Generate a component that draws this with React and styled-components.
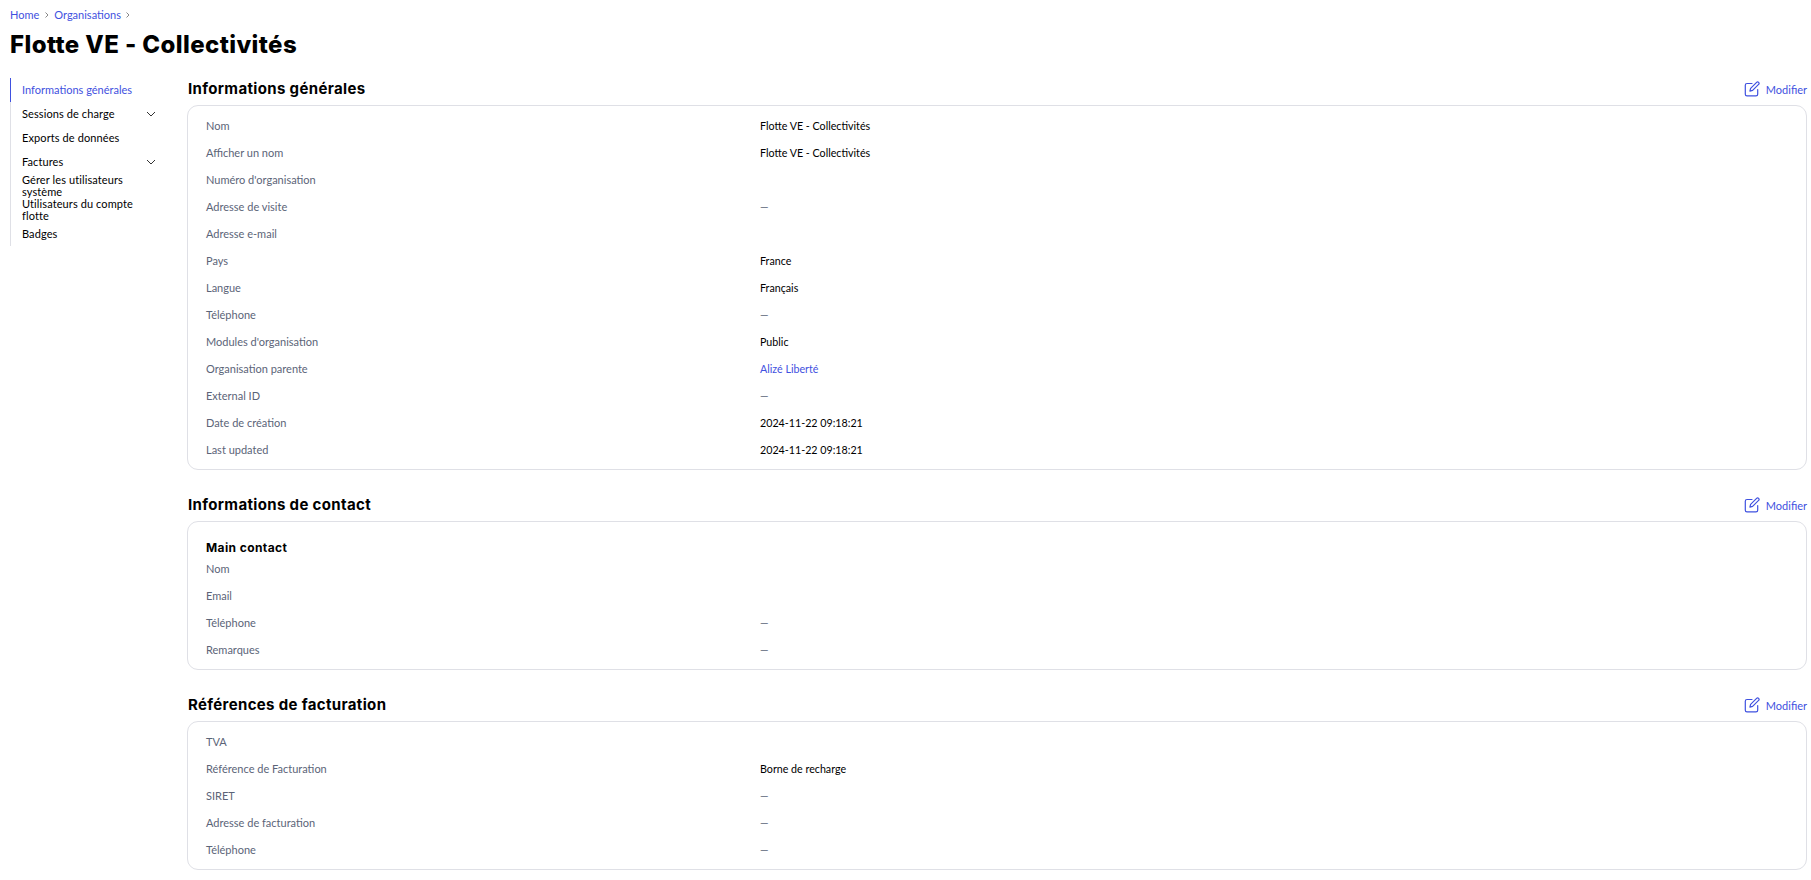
import React from "react";
import styled, { createGlobalStyle } from "styled-components";

const Global = createGlobalStyle`
  html, body { margin: 0; padding: 0; background: #fff; }
  body { font-family: "Lato", "Liberation Sans", sans-serif; color: #000; }
`;
const Page = styled.div`
  padding: 7px 4px 0 10px;
  height: 873px;
  overflow: hidden;
`;
const Crumbs = styled.nav`
  display: flex;
  align-items: center;
  height: 15px;
  font-size: 11px;
  color: #3f51e0;
`;
const Crumb = styled.a`
  color: #3f51e0;
`;
const Sep = styled.svg`
  width: 12px;
  height: 12px;
  margin: 0 1.5px;
  flex: none;
`;
const Title = styled.h1`
  margin: 8px 0 0;
  font-family: "Inter", sans-serif;
  font-size: 24px;
  line-height: 30px;
  font-weight: 800;
  letter-spacing: 0.4px;
`;
const Body = styled.div`
  display: flex;
  margin-top: 18px;
`;
const Side = styled.aside`
  width: 168px;
  flex: none;
  margin-right: 8px;
  align-self: flex-start;
  border-left: 1px solid #dfe0e6;
  display: flex;
  flex-direction: column;
`;
const NavItem = styled.div`
  display: flex;
  align-items: ${(p) => (p.$wrap ? "flex-start" : "center")};
  justify-content: space-between;
  min-height: 24px;
  padding: 0 22px 0 11px;
  font-size: 11px;
  letter-spacing: ${(p) => (p.$active ? "0" : "0.1px")};
  line-height: 12px;
  color: ${(p) => (p.$active ? "#3f51e0" : "#000")};
  ${(p) => p.$active && `border-left: 1px solid #3f51e0; margin-left: -1px;`}
`;
const Main = styled.main`
  flex: 1;
  min-width: 0;
  display: flex;
  flex-direction: column;
  gap: 24px;
`;
const Head = styled.div`
  display: flex;
  align-items: center;
  justify-content: space-between;
  height: 20px;
  padding-top: 1px;
  margin-bottom: 6px;
`;
const H2 = styled.h2`
  margin: 0 0 0 1px;
  font-family: "Inter", sans-serif;
  font-size: 15px;
  font-weight: 700;
  line-height: 20px;
  letter-spacing: 0.35px;
`;
const Edit = styled.a`
  display: flex;
  align-items: center;
  gap: 6px;
  font-size: 11px;
  color: #3f51e0;
`;
const Card = styled.section`
  border: 1px solid #dfe0e6;
  border-radius: 11px;
  padding: ${(p) => (p.$contact ? "18px 18px 6px" : "6px 18px")};
`;
const H3 = styled.h3`
  margin: 0;
  font-family: "Inter", sans-serif;
  font-size: 12px;
  font-weight: 700;
  line-height: 15px;
  letter-spacing: 0.4px;
`;
const Row = styled.div`
  display: grid;
  grid-template-columns: 554px 1fr;
  height: 27px;
  align-items: center;
  font-size: 11px;
`;
const Label = styled.span`
  color: #5b6478;
`;
const Value = styled.span`
  font-size: 10.7px;
  color: ${(p) => (p.$link ? "#3f51e0" : p.$empty ? "#5b6478" : "#000")};
`;

const Chevron = () => (
  <svg width="12" height="12" viewBox="0 0 12 12" fill="none" stroke="#333" strokeWidth="1">
    <path d="M2 4l4 4 4-4" />
  </svg>
);
const CrumbSep = () => (
  <Sep viewBox="0 0 12 12" fill="none" stroke="#888" strokeWidth="1">
    <path d="M4.5 3.5L7 6l-2.5 2.5" />
  </Sep>
);
const EditIcon = () => (
  <svg width="16" height="16" viewBox="0 0 16 16" fill="none" stroke="#3f51e0" strokeWidth="1.2" strokeLinecap="round" strokeLinejoin="round">
    <path d="M8 2.5H3A1.7 1.7 0 0 0 1.3 4.2v9A1.7 1.7 0 0 0 3 14.9h9a1.7 1.7 0 0 0 1.7-1.7V8.5" />
    <path d="M12.6 1.4a1.4 1.4 0 0 1 2 2L8.6 9.4l-2.7.7.7-2.7z" />
  </svg>
);

const Section = ({ title, contact, rows }) => (
  <div>
    <Head>
      <H2>{title}</H2>
      <Edit><EditIcon />Modifier</Edit>
    </Head>
    <Card $contact={contact}>
      {contact && <H3>Main contact</H3>}
      {rows.map(([l, v, link]) => (
        <Row key={l}>
          <Label>{l}</Label>
          <Value $link={link} $empty={v === "—"}>{v}</Value>
        </Row>
      ))}
    </Card>
  </div>
);

const general = [
  ["Nom", "Flotte VE - Collectivités"],
  ["Afficher un nom", "Flotte VE - Collectivités"],
  ["Numéro d'organisation", ""],
  ["Adresse de visite", "—"],
  ["Adresse e-mail", ""],
  ["Pays", "France"],
  ["Langue", "Français"],
  ["Téléphone", "—"],
  ["Modules d'organisation", "Public"],
  ["Organisation parente", "Alizé Liberté", true],
  ["External ID", "—"],
  ["Date de création", "2024-11-22 09:18:21"],
  ["Last updated", "2024-11-22 09:18:21"],
];
const contact = [
  ["Nom", ""],
  ["Email", ""],
  ["Téléphone", "—"],
  ["Remarques", "—"],
];
const billing = [
  ["TVA", ""],
  ["Référence de Facturation", "Borne de recharge"],
  ["SIRET", "—"],
  ["Adresse de facturation", "—"],
  ["Téléphone", "—"],
];

export default function App() {
  return (
    <Page>
      <Global />
      <Crumbs>
        <Crumb>Home</Crumb><CrumbSep /><Crumb>Organisations</Crumb><CrumbSep />
      </Crumbs>
      <Title>Flotte VE - Collectivités</Title>
      <Body>
        <Side>
          <NavItem $active>Informations générales</NavItem>
          <NavItem>Sessions de charge<Chevron /></NavItem>
          <NavItem>Exports de données</NavItem>
          <NavItem>Factures<Chevron /></NavItem>
          <NavItem $wrap>Gérer les utilisateurs<br />système</NavItem>
          <NavItem $wrap>Utilisateurs du compte<br />flotte</NavItem>
          <NavItem>Badges</NavItem>
        </Side>
        <Main>
          <Section title="Informations générales" rows={general} />
          <Section title="Informations de contact" contact rows={contact} />
          <Section title="Références de facturation" rows={billing} />
        </Main>
      </Body>
    </Page>
  );
}
